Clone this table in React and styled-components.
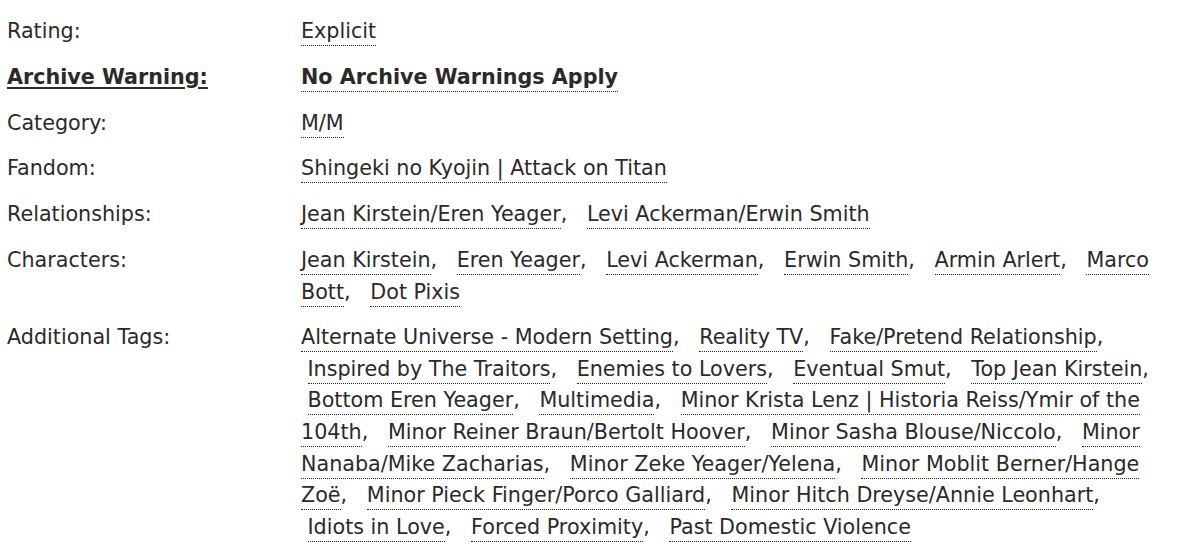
import React from "react";
import styled, { createGlobalStyle } from "styled-components";

const Global = createGlobalStyle`
  html, body { margin: 0; padding: 0; background: #fff; }
  body {
    font-family: "DejaVu Sans", "Liberation Sans", sans-serif;
    color: #2a2a2a;
  }
`;

const Meta = styled.dl`
  display: grid;
  grid-template-columns: 294px 862px;
  column-gap: 0;
  row-gap: 14.2px;
  margin: 0;
  padding: 16px 0 0 7px;
  font-size: 20.7px;
  line-height: 31.6px;
`;

const Term = styled.dt`
  margin: 0;
  font-weight: ${(p) => (p.$strong ? 700 : 400)};
  text-decoration: ${(p) => (p.$strong ? "underline" : "none")};
  text-decoration-thickness: 2px;
  text-underline-offset: 3px;
`;

const Detail = styled.dd`
  margin: 0;
  font-weight: ${(p) => (p.$strong ? 700 : 400)};
`;

const TagList = styled.ul`
  display: inline;
  margin: 0;
  padding: 0;
  list-style: none;
`;

const Tag = styled.li`
  display: inline;
  & + & { padding-left: 6.5px; }
  &:not(:last-child)::after { content: ",\\00a0\\20"; }
`;

const TagLink = styled.a`
  color: #2a2a2a;
  text-decoration: none;
  border-bottom: 1px dotted #2a2a2a;
  padding-bottom: 2px;
`;

const rows = [
  { term: "Rating:", tags: ["Explicit"] },
  { term: "Archive Warning:", tags: ["No Archive Warnings Apply"], strong: true },
  { term: "Category:", tags: ["M/M"] },
  { term: "Fandom:", tags: ["Shingeki no Kyojin | Attack on Titan"] },
  { term: "Relationships:", tags: ["Jean Kirstein/Eren Yeager", "Levi Ackerman/Erwin Smith"] },
  {
    term: "Characters:",
    tags: ["Jean Kirstein", "Eren Yeager", "Levi Ackerman", "Erwin Smith", "Armin Arlert", "Marco Bott", "Dot Pixis"],
  },
  {
    term: "Additional Tags:",
    tags: [
      "Alternate Universe - Modern Setting",
      "Reality TV",
      "Fake/Pretend Relationship",
      "Inspired by The Traitors",
      "Enemies to Lovers",
      "Eventual Smut",
      "Top Jean Kirstein",
      "Bottom Eren Yeager",
      "Multimedia",
      "Minor Krista Lenz | Historia Reiss/Ymir of the 104th",
      "Minor Reiner Braun/Bertolt Hoover",
      "Minor Sasha Blouse/Niccolo",
      "Minor Nanaba/Mike Zacharias",
      "Minor Zeke Yeager/Yelena",
      "Minor Moblit Berner/Hange Zoë",
      "Minor Pieck Finger/Porco Galliard",
      "Minor Hitch Dreyse/Annie Leonhart",
      "Idiots in Love",
      "Forced Proximity",
      "Past Domestic Violence",
    ],
  },
];

export default function App() {
  return (
    <>
      <Global />
      <Meta>
        {rows.map((r) => (
          <React.Fragment key={r.term}>
            <Term $strong={r.strong}>{r.term}</Term>
            <Detail $strong={r.strong}>
              <TagList>
                {r.tags.map((t) => (
                  <Tag key={t}>
                    <TagLink href="#">{t}</TagLink>
                  </Tag>
                ))}
              </TagList>
            </Detail>
          </React.Fragment>
        ))}
      </Meta>
    </>
  );
}
